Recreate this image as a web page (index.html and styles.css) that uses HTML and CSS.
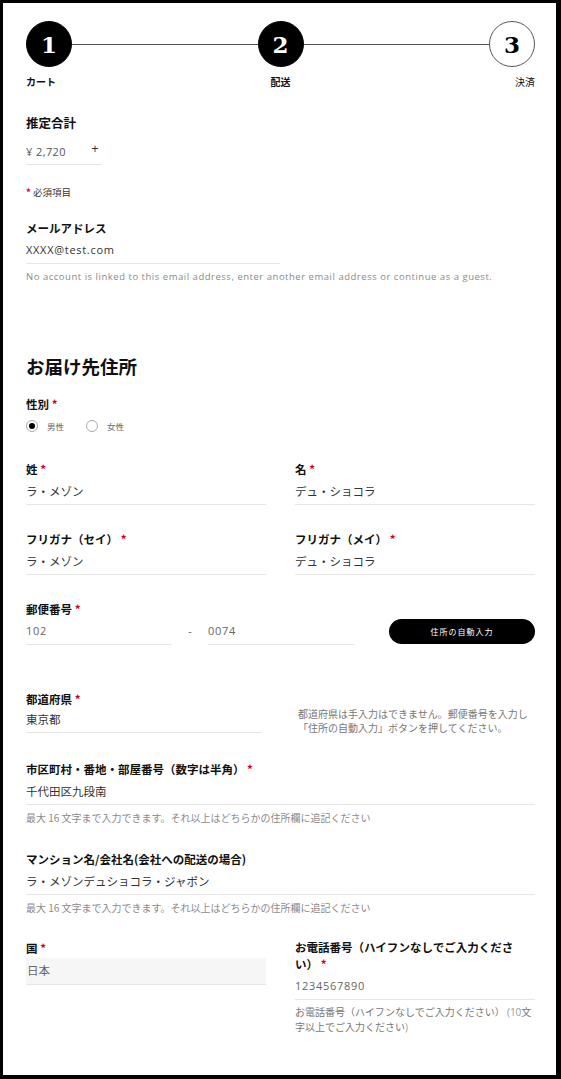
FILE: index.html
```html
<!DOCTYPE html>
<html lang="ja">
<head>
    <meta charset="UTF-8">
    <title>配送 - お届け先住所</title>
    <link rel="stylesheet" href="styles.css">
</head>
<body>
    <div class="frame">
        <!-- ステップ表示 -->
        <div class="steps">
            <div class="step done">1</div>
            <div class="step-line"></div>
            <div class="step done">2</div>
            <div class="step-line"></div>
            <div class="step">3</div>
        </div>
        <div class="step-labels">
            <span class="left bold">カート</span>
            <span class="center bold">配送</span>
            <span class="right">決済</span>
        </div>

        <div class="label total-label">推定合計</div>
        <div class="total">
            <span>¥ 2,720</span>
            <span class="plus">+</span>
        </div>

        <div class="required-note"><span class="req">*</span> 必須項目</div>

        <div class="field email">
            <div class="label">メールアドレス</div>
            <div class="value latin">XXXX@test.com</div>
        </div>
        <div class="note latin">No account is linked to this email address, enter another email address or continue as a guest.</div>

        <h2 class="section-title">お届け先住所</h2>

        <div class="label gender-label">性別 <span class="req">*</span></div>
        <div class="radios">
            <span class="radio checked"></span><span class="radio-text">男性</span>
            <span class="radio"></span><span class="radio-text">女性</span>
        </div>

        <div class="row first-row">
            <div class="field">
                <div class="label">姓 <span class="req">*</span></div>
                <div class="value">ラ・メゾン</div>
            </div>
            <div class="field">
                <div class="label">名 <span class="req">*</span></div>
                <div class="value">デュ・ショコラ</div>
            </div>
        </div>

        <div class="row">
            <div class="field">
                <div class="label">フリガナ（セイ） <span class="req">*</span></div>
                <div class="value">ラ・メゾン</div>
            </div>
            <div class="field">
                <div class="label">フリガナ（メイ） <span class="req">*</span></div>
                <div class="value">デュ・ショコラ</div>
            </div>
        </div>

        <div class="zip-block">
            <div class="label">郵便番号 <span class="req">*</span></div>
            <div class="zip-row">
                <div class="value latin light zip">102</div>
                <span class="dash">-</span>
                <div class="value latin light zip">0074</div>
                <button class="auto-btn">住所の自動入力</button>
            </div>
        </div>

        <div class="row pref-row">
            <div class="field pref">
                <div class="label">都道府県 <span class="req">*</span></div>
                <div class="value">東京都</div>
            </div>
            <div class="pref-note">都道府県は手入力はできません。郵便番号を入力し<br>「住所の自動入力」ボタンを押してください。</div>
        </div>

        <div class="field wide city">
            <div class="label">市区町村・番地・部屋番号（数字は半角） <span class="req">*</span></div>
            <div class="value">千代田区九段南</div>
        </div>
        <div class="note">最大 16 文字まで入力できます。それ以上はどちらかの住所欄に追記ください</div>

        <div class="field wide building">
            <div class="label">マンション名/会社名(会社への配送の場合)</div>
            <div class="value">ラ・メゾンデュショコラ・ジャポン</div>
        </div>
        <div class="note">最大 16 文字まで入力できます。それ以上はどちらかの住所欄に追記ください</div>

        <div class="row last-row">
            <div class="field country">
                <div class="label">国 <span class="req">*</span></div>
                <div class="select-box">日本</div>
            </div>
            <div class="phone">
                <div class="field">
                    <div class="label two-line">お電話番号（ハイフンなしでご入力ください） <span class="req">*</span></div>
                    <div class="value latin light">1234567890</div>
                </div>
                <div class="note phone-note">お電話番号（ハイフンなしでご入力ください） <span class="latin">(10</span>文字以上でご入力ください<span class="latin">)</span></div>
            </div>
        </div>
    </div>
</body>
</html>
```

FILE: styles.css
```css
html, body {
    margin: 0;
    padding: 0;
    background: #000;
}
body {
    font-family: "Noto Sans CJK JP", sans-serif;
    color: #222;
}
.frame {
    box-sizing: border-box;
    width: 561px;
    height: 1079px;
    background: #fff;
    border-style: solid;
    border-color: #000;
    border-width: 3px 5px 4px 3px;
    padding: 18px 21px 0 23px;
    overflow: hidden;
}

/* ステップ */
.steps {
    display: flex;
    align-items: center;
}
.step {
    width: 46px;
    height: 46px;
    box-sizing: border-box;
    border-radius: 50%;
    border: 1px solid #555;
    display: flex;
    align-items: center;
    justify-content: center;
    font-family: "DejaVu Serif", "Liberation Serif", serif;
    font-weight: bold;
    font-size: 23px;
    color: #000;
    background: #fff;
}
.step.done {
    background: #000;
    border-color: #000;
    color: #fff;
}
.step-line {
    flex: 1;
    height: 1px;
    background: #555;
}
.step-labels {
    display: grid;
    grid-template-columns: 1fr 1fr 1fr;
    margin-top: 8px;
    font-size: 10px;
    line-height: 14px;
    color: #111;
}
.step-labels .left { text-align: left; }
.step-labels .center { text-align: center; }
.step-labels .right { text-align: right; }
.bold { font-weight: bold; }

/* 共通 */
.label {
    font-size: 11.5px;
    line-height: 18px;
    font-weight: bold;
    color: #111;
}
.req {
    color: #d0021b;
    font-weight: bold;
}
.value {
    margin-top: 4px;
    padding-bottom: 4px;
    border-bottom: 1px solid #e6e6e6;
    font-size: 11.5px;
    line-height: 18px;
    color: #333;
}
.latin {
    font-family: "Open Sans", "Noto Sans CJK JP", sans-serif;
}
.value.latin {
    font-size: 11px;
    letter-spacing: 0.7px;
}
.light { color: #666; }
.note {
    margin-top: 6px;
    font-size: 10px;
    line-height: 14px;
    color: #8a8a8a;
}
.note.latin {
    font-size: 9.5px;
    letter-spacing: 0.52px;
}

.total-label {
    margin-top: 25px;
    font-size: 12.5px;
}
.total {
    margin-top: 11px;
    width: 76px;
    display: flex;
    justify-content: space-between;
    padding-bottom: 3px;
    border-bottom: 1px solid #e6e6e6;
    font-family: "Open Sans", sans-serif;
    font-size: 11px;
    letter-spacing: 0.4px;
    line-height: 18px;
    color: #555;
}
.total .plus {
    font-size: 13px;
    line-height: 10px;
    margin-right: 3px;
    color: #333;
}
.required-note {
    margin-top: 20px;
    font-size: 9.5px;
    line-height: 14px;
    color: #333;
}
.email { margin-top: 20px; }
.email .value { width: 254px; }

.section-title {
    margin: 69px 0 0;
    font-size: 18.5px;
    line-height: 26px;
    font-weight: bold;
    color: #111;
}
.gender-label { margin-top: 16px; }
.radios {
    margin-top: 6px;
    display: flex;
    align-items: center;
    font-size: 8.5px;
    line-height: 14px;
    color: #666;
}
.radio {
    width: 12px;
    height: 12px;
    box-sizing: border-box;
    border: 1px solid #aaa;
    border-radius: 50%;
    display: flex;
    align-items: center;
    justify-content: center;
}
.radio.checked::after {
    content: "";
    width: 6px;
    height: 6px;
    border-radius: 50%;
    background: #000;
}
.radio-text {
    margin: 0 22px 0 9px;
}

.row {
    display: grid;
    grid-template-columns: 240px 240px;
    column-gap: 29px;
    margin-top: 25px;
}
.first-row { margin-top: 27px; }

.zip-block { margin-top: 25px; }
.zip-row {
    display: flex;
    align-items: flex-end;
}
.zip { width: 146px; }
.dash {
    width: 36px;
    text-align: center;
    font-size: 11px;
    line-height: 18px;
    padding-bottom: 5px;
    color: #666;
}
.auto-btn {
    margin-left: auto;
    margin-bottom: 1px;
    width: 146px;
    height: 25px;
    border: none;
    border-radius: 13px;
    background: #000;
    color: #fff;
    font-family: "Noto Sans CJK JP", sans-serif;
    font-size: 8px;
    letter-spacing: 1px;
    cursor: pointer;
}

.pref-row { margin-top: 45px; }
.pref .value { width: 236px; margin-top: 2px; }
.pref-note {
    padding: 17px 0 0 3px;
    font-size: 10px;
    line-height: 14px;
    color: #777;
    white-space: nowrap;
}
.wide { margin-top: 25px; }
.building { margin-top: 25px; }

.last-row { margin-top: 24px; }
.select-box {
    margin-top: 1px;
    height: 27px;
    line-height: 25px;
    padding-left: 1px;
    background: #f6f6f6;
    border-bottom: 1px solid #e6e6e6;
    box-sizing: border-box;
    font-size: 11.5px;
    color: #666;
}
.two-line { line-height: 17px; }
.phone-note {
    margin-top: 5px;
    line-height: 13.5px;
    color: #777;
}
.phone-note .latin { color: #999; }
```
